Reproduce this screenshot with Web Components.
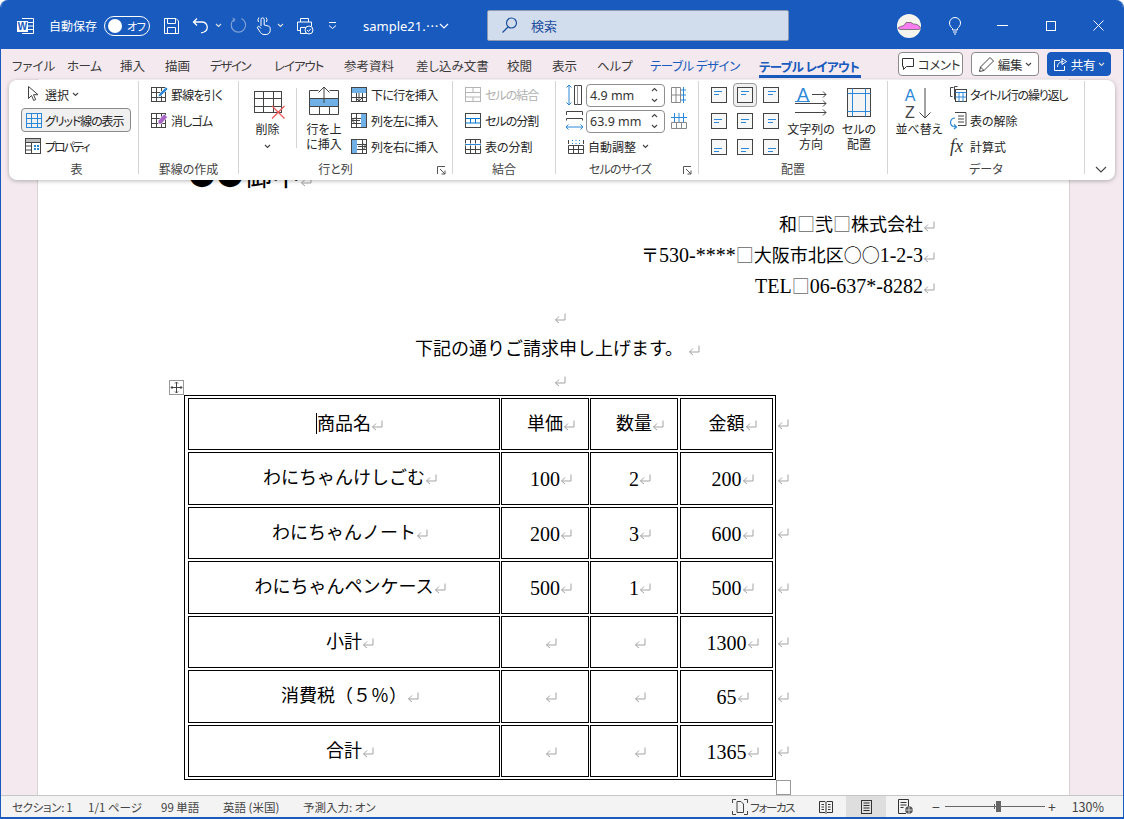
<!DOCTYPE html>
<html lang="ja"><head><meta charset="utf-8"><title>Word</title>
<style>
html,body{margin:0;padding:0;background:#fff}
body{font-family:"Noto Sans CJK JP","Noto Sans",sans-serif}
</style>
<script>
const K='#444',B='#2b88d8',L='#a9d3f2',G='#b5b5b5';
const S=(w,h,c)=>`<svg xmlns="http://www.w3.org/2000/svg" width="${w}" height="${h}" viewBox="0 0 ${w} ${h}" fill="none" stroke-width="1" style="display:block;overflow:visible">${c}</svg>`;
const tbl=(x,y,w,h,cols,rows,c=K)=>{let s=`<rect x="${x+.5}" y="${y+.5}" width="${w-1}" height="${h-1}" stroke="${c}"/>`;
 for(let i=1;i<cols;i++){const X=Math.round(x+w*i/cols)+.5;s+=`<path d="M${X} ${y}v${h}" stroke="${c}"/>`}
 for(let i=1;i<rows;i++){const Y=Math.round(y+h*i/rows)+.5;s+=`<path d="M${x} ${Y}h${w}" stroke="${c}"/>`}return s};
const al=(y,x)=>S(16,16,`<rect x=".5" y=".5" width="15" height="15" fill="#f7f7f7" stroke="${K}"/><path d="M${x} ${y}.5h8M${x} ${y+3}.5h5" stroke="${B}"/>`);
const ICONS={
word:S(18,18,`<path d="M6 1.500h11.500v15H6" stroke="#fff"/><path d="M9 5.500h8M9 9h8M9 12.500h8" stroke="#fff"/><rect x="1" y="4" width="11" height="11" fill="#fff"/><text x="6.500" y="13" font-family="Liberation Sans" font-weight="700" font-size="10" text-anchor="middle" fill="#185abd" stroke="none">W</text>`),
save:S(17,18,`<path d="M1.500 1.500h11.500l2.500 2.500v12.500h-14z" stroke="#fff" stroke-linejoin="round"/><path d="M4.500 1.500v5h8v-5M4.500 16.500v-6h8v6" stroke="#fff"/>`),
undo:S(17,17,`<path d="M5 8.500 1.500 5 5 1.500M1.500 5h8.500a5.200 5.200 0 0 1 2 10l-3 1" stroke="#fff" stroke-width="1.300"/>`),
redo:S(17,17,`<path d="M11.500 1.500A7.200 7.200 0 1 1 4.500 2" stroke="#7f9fd8" stroke-width="1.200"/><path d="M2.500 1 5 2.500 3.500 5" stroke="#7f9fd8"/>`),
touch:S(17,20,`<path d="M6 10V3.500a1.600 1.600 0 0 1 3.200 0V9l4 1c1.300.4 2 1.200 2 2.500v2c0 2-1.700 4-4 4H9c-1.500 0-2.600-.8-3.500-2l-3-4.500c-.6-1.200 1-2.300 2-1.300L6 12.500" stroke="#fff"/><path d="M3.500 6A3.800 3.800 0 0 1 4 1.500M11.500 6a3.800 3.800 0 0 0-.5-4.500" stroke="#fff"/>`),
print:S(18,18,`<path d="M4.500 5V1.500h8V5M4.500 13.500h-3v-8.500h14v4M4.500 10.500h6v6h-6z" stroke="#fff"/><circle cx="13" cy="13" r="4" fill="#185abd" stroke="#fff"/><path d="M11 13l1.500 1.500 2.500-2.800" stroke="#fff"/>`),
custom:S(9,9,`<path d="M1 1.500h7M1 4.500l3.500 3 3.500-3" stroke="#fff"/>`),
chevW:S(10,6,`<path d="M1 1l4 4 4-4" stroke="#fff" stroke-width="1.200"/>`),
chevS:S(7,5,`<path d="M1 1l2.500 2.500L6 1" stroke="#ddd" stroke-width="1.100"/>`),
chev:S(7,5,`<path d="M1 1l2.500 2.500L6 1" stroke="#444" stroke-width="1.100"/>`),
chevL:S(12,7,`<path d="M1 1l5 5 5-5" stroke="#444" stroke-width="1.100"/>`),
search:S(17,17,`<circle cx="10.500" cy="6" r="5" stroke="#1e4f9e" stroke-width="1.200"/><path d="M7 10 1.500 15.500" stroke="#1e4f9e" stroke-width="1.200"/>`),
bulb:S(14,19,`<path d="M4.500 12.500C3 11 1.500 9.500 1.500 7a5.500 5.500 0 0 1 11 0c0 2.500-1.500 4-3 5.500v1.500h-5z" stroke="#fff"/><path d="M5 16h4M6 18h2" stroke="#fff"/>`),
min:S(11,1,`<path d="M0 .5h11" stroke="#fff"/>`),
max:S(10,10,`<rect x=".5" y=".5" width="9" height="9" stroke="#fff"/>`),
close:S(11,11,`<path d="M.5.5l10 10M10.500.5l-10 10" stroke="#fff"/>`),
comment:S(14,14,`<path d="M1.500 1.500h11v8h-7l-3 3v-3h-1z" stroke="#333"/>`),
pencil:S(17,17,`<path d="M1.500 15.500l1-4.500L12 1.500l3.500 3.500L6 14.500z" stroke="#444"/><path d="M2.500 11l3.500 3.500" stroke="#444"/>`),
share:S(15,15,`<path d="M7 3.500H1.500v10h10V9" stroke="#fff"/><path d="M4.500 10c0-3.500 2.500-5.500 6-5.500M9 1.500l4.500 3-4.500 3z" stroke="#fff"/>`),
select:S(16,18,`<path d="M3.500 1.500v12l3-3 2.200 5 2-.9-2.200-4.900h4.500z" stroke="#444" fill="#fff"/>`),
grid:S(16,15,tbl(0,0,16,15,3,3,B)),
props:S(16,16,`<rect x=".5" y=".5" width="15" height="15" stroke="${K}"/><rect x="1" y="1" width="14" height="3" fill="#bbb"/><path d="M.5 4.500h15M6.500 4.500v11M.5 8h6M.5 12h6" stroke="${K}"/><rect x="9" y="7" width="2" height="2" fill="${B}"/><rect x="12" y="7" width="2" height="2" fill="${B}"/><rect x="9" y="10" width="2" height="2" fill="${B}"/><rect x="12" y="10" width="2" height="2" fill="${B}"/>`),
draw:S(17,16,tbl(0,1,15,15,3,3)+`<path d="M7 11l1-3 7-7 2 2-7 7z" fill="${B}" stroke="#fff" stroke-width=".6"/>`),
erase:S(17,16,tbl(0,1,15,15,3,3)+`<path d="M7 9l6-7 3.500 3-6 7h-3z" fill="#a864c4" stroke="#fff" stroke-width=".6"/>`),
del:S(31,28,tbl(0,0,28,22,3,3)+`<path d="M18 15l12.500 12.500M30.500 15 18 27.500" stroke="#ee5a5a" stroke-width="1.300"/>`),
insUp:S(30,29,`<path d="M.5 4.500h9M20.500 4.500h9M.5 4.500v24h29v-24" stroke="${K}"/><rect x="1" y="12" width="28" height="8" fill="#6fb0e6"/><path d="M.5 12.500h29M.5 20.500h29M10.500 20.500v8M20.500 20.500v8" stroke="${K}"/><path d="M15 17V1M9.500 6.500 15 1l5.500 5.500" stroke="${K}"/>`),
insD:S(16,15,tbl(0,0,16,15,3,3)+`<rect x="1" y="1" width="14" height="5" fill="#6fb0e6"/><path d="M8 6v8M5 11l3 3 3-3" stroke="${K}"/>`),
insL:S(16,15,tbl(0,0,16,15,3,3)+`<rect x="10" y="1" width="5" height="13" fill="#6fb0e6"/><path d="M9 7.500H1M4 4.500l-3 3 3 3" stroke="${K}"/>`),
insR:S(16,15,tbl(0,0,16,15,3,3)+`<rect x="1" y="1" width="5" height="13" fill="#6fb0e6"/><path d="M7 7.500h8M12 4.500l3 3-3 3" stroke="${K}"/>`),
merge:S(16,15,`<rect x=".5" y=".5" width="15" height="14" stroke="${G}"/><path d="M.5 5.500h15M.5 10h15M8 .5v5M8 10v5" stroke="${G}"/>`),
splitC:S(16,15,`<rect x=".5" y=".5" width="15" height="14" stroke="${K}"/><path d="M.5 5.500h15M.5 10h15" stroke="#0078d4" stroke-width="1.200"/><path d="M5.500 5.500v4.500M10.500 5.500v4.500" stroke="#0078d4"/>`),
splitT:S(16,15,`<path d="M.5 4.500v-4h15v4M.5 6.500v8h15v-8M5.500 6.500v8M10.500 6.500v8M5.500.5v4M10.500.5v4M.5 10.500h15" stroke="${K}"/><path d="M0 5.500h16" stroke="${B}"/>`),
rowH:S(17,22,`<path d="M3 1v20M.5 3.500 3 1l2.500 2.500M.5 18.500 3 21l2.500-2.500" stroke="${B}"/><path d="M8.500 1.500h7v19h-7z" stroke="${K}"/><path d="M11.500 1.500v19" stroke="#999"/>`),
colW:S(17,22,`<path d="M.5 5v-3.500h16V5M.5 10.500v-2h16v2" stroke="${K}"/><path d="M0 17h17M2.500 14.500 0 17l2.500 2.500M14.500 14.500 17 17l-2.500 2.500" stroke="${B}"/>`),
distH:S(16,17,`<path d="M.5.5h9v15h-9zM.5 8h9M5 .5v15" stroke="#888"/><path d="M12.500 0v16M10 3h5M10 8h5M10 13h5" stroke="${B}"/>`),
distW:S(16,17,`<path d="M.5 9.500h15v6h-15zM5.500 9.500v6M10.500 9.500v6" stroke="#888"/><path d="M0 4.500h16M3.500 0v9M8 0v9M12.500 0v9" stroke="${B}"/>`),
auto:S(16,15,`<path d="M.5 6.500h15v8h-15zM5.500 6.500v8M10.500 6.500v8M.5 10.500h15" stroke="${K}"/><path d="M.5 1v4M15.500 1v4" stroke="${K}"/><path d="M4 1.500h1M7.500 1.500h1M11 1.500h1M4 4.500h1M7.500 4.500h1M11 4.500h1" stroke="${B}"/>`),
a1:al(4,3),a2:al(4,4),a3:al(4,5),a4:al(6,3),a5:al(6,4),a6:al(6,5),a7:al(9,3),a8:al(9,4),a9:al(9,5),
dir:S(32,32,`<text x="8" y="17" font-family="Liberation Sans" font-size="18" text-anchor="middle" fill="${B}" stroke="none">A</text><path d="M0 17.500h15" stroke="${B}"/><path d="M17 10.500h14M28 7.500l3 3-3 3M0 19.500h31M28 16.500l3 3-3 3M0 28.500h31M28 25.500l3 3-3 3" stroke="${K}"/>`),
margin:S(24,29,`<rect x=".5" y=".5" width="23" height="28" fill="#f4f4f4" stroke="${K}"/><path d="M.5 5.500h23M.5 23.500h23M5.500.5v28M18.500.5v28" stroke="${B}"/>`),
sort:S(32,32,`<text x="7" y="14" font-family="Liberation Sans" font-size="16" text-anchor="middle" fill="${B}" stroke="none">A</text><text x="7" y="31" font-family="Liberation Sans" font-size="16" text-anchor="middle" fill="${K}" stroke="none">Z</text><path d="M22 1v30M16.500 25.500 22 31l5.500-5.500" stroke="${K}"/>`),
repeat:S(17,16,`<path d="M.5 1.500h3M.5 1.500v9h2M7.500.5h-3v13" stroke="${K}"/><rect x="5.500" y="3.500" width="11" height="12" fill="#fff" stroke="${K}"/><path d="M5.500 6.500h11M9 6.500v9M13 6.500v9M5.500 11h11" stroke="${B}"/>`),
conv:S(17,18,`<path d="M5 1.500h11v13H8" stroke="${K}"/><path d="M8 5h6M8 8h6M8 11h6" stroke="${K}"/><path d="M5 7a4.500 4.500 0 0 0-2 8.500l3 .5M4 13.500 6.500 16 4 18" stroke="${B}" stroke-width="1.200"/>`),
fx:S(17,17,`<text x="0" y="14" font-family="Liberation Serif" font-style="italic" font-size="18" fill="#333" stroke="none">fx</text>`),
launch:S(9,9,`<path d="M.5 8V.5H8M3 3l5 5M8 4.500V8H4.500" stroke="#555"/>`),
focus:S(16,16,`<path d="M.5 4V.5H4M12 .5h3.500V4M.5 12v3.500H4M12 15.500h3.500V12" stroke="#444"/><path d="M5 2.500h4l2.500 2.500v8.500H5z" stroke="#444"/>`),
read:S(14,14,`<path d="M.5 1.500h5.500l1 1 1-1h5.500v11H8l-1 1-1-1H.5zM7 2.500v10M2.500 4.500h2.500M2.500 7h2.500M2.500 9.500h2.500M9 4.500h2.500M9 7h2.500M9 9.500h2.500" stroke="#333"/>`),
page:S(11,14,`<rect x=".5" y=".5" width="10" height="13" stroke="#333"/><path d="M2.500 3h6M2.500 5.500h6M2.500 8h6M2.500 10.500h6" stroke="#333"/>`),
web:S(15,15,`<path d="M8 14.500H.5V.5h10v8M2.500 3.500h6M2.500 6h6M2.500 8.500h3" stroke="#333"/><circle cx="11" cy="11" r="3.800" fill="#555"/><path d="M7.500 11h7M11 7.500v7" stroke="#fff" stroke-width=".7"/>`),
ret:S(12,12,`<path d="M11 1.500v6.500H1.500M5 4.500 1.500 8 5 11" stroke="#a3a3a3"/>`),
avatar:S(24,24,`<circle cx="12" cy="12" r="12" fill="#f5f5ee"/><path d="M1 14c1-1 4-2 6-2.500l2-3h5l2.500 1.500c3 0 6 1 7 4 0 1.500-2 1.500-4 1.500H3z" fill="#f77cf0" stroke="#555" stroke-width=".7"/>`)
};
class UiIcon extends HTMLElement{constructor(){super();this.attachShadow({mode:'open'})}
 connectedCallback(){this.shadowRoot.innerHTML=`<style>:host{display:inline-block;line-height:0;flex:none}</style>`+(ICONS[this.getAttribute('name')]||'')}}
class RetMark extends HTMLElement{constructor(){super();this.attachShadow({mode:'open'}).innerHTML=`<style>:host{display:inline-block;width:0;height:12px;vertical-align:-1px;overflow:visible;text-align:left}div{width:12px}</style><div>${ICONS.ret}</div>`}}

class WordApp extends HTMLElement{constructor(){super();this.attachShadow({mode:'open'}).innerHTML=`<style>
:host{display:flex;flex-direction:column;width:1124px;height:819px;box-sizing:border-box;border:solid #185abd;border-width:0 1px 2px;border-radius:8px 8px 0 0;overflow:hidden;position:relative;background:#f3e9ee}
.mid{flex:1;position:relative;min-height:0;display:flex;flex-direction:column}
ribbon-panel{position:absolute;left:8px;top:1px}
</style><title-bar></title-bar><tab-bar></tab-bar><div class="mid"><doc-area></doc-area><ribbon-panel></ribbon-panel></div><status-bar></status-bar>`}}

class TitleBar extends HTMLElement{constructor(){super();this.attachShadow({mode:'open'}).innerHTML=`<style>
:host{display:flex;align-items:center;height:49px;margin:0 -1px;padding:2px 0 0;box-sizing:border-box;background:#185abd;color:#fff;font-size:12.500px;font-feature-settings:"palt"}
ui-icon{margin-left:var(--m,0)}
.auto{margin-left:15px;width:50px;white-space:nowrap;font-size:12px}
.tog{margin-left:5px;width:44px;height:18px;border:1.500px solid #fff;border-radius:10px;display:flex;align-items:center;font-size:11px;flex:none;box-sizing:content-box;white-space:nowrap;letter-spacing:-.5px}
.tog i{width:14px;height:14px;background:#fff;border-radius:50%;margin-left:3px;margin-right:5px;flex:none}
.file{margin-left:26px;width:70px;white-space:nowrap;font-family:"Noto Sans","Noto Sans CJK JP",sans-serif;font-size:13px}
.box{margin-left:38px;width:300px;height:29px;background:#d1dcec;border:1px solid #8a9bb3;border-radius:2px;display:flex;align-items:center;color:#1e4f9e;font-size:13px;flex:none}
.box ui-icon{margin:0 13px 0 13px}
.sp{flex:1}
</style>
<ui-icon name="word" style="--m:16px"></ui-icon><span class="auto">自動保存</span><span class="tog"><i></i>オフ</span>
<ui-icon name="save" style="--m:13px"></ui-icon><ui-icon name="undo" style="--m:12px"></ui-icon><ui-icon name="chevS" style="--m:6px"></ui-icon>
<ui-icon name="redo" style="--m:8px"></ui-icon><ui-icon name="touch" style="--m:8px"></ui-icon><ui-icon name="chevS" style="--m:5px"></ui-icon>
<ui-icon name="print" style="--m:12px"></ui-icon><ui-icon name="custom" style="--m:14px"></ui-icon>
<span class="file">sample21.⋯</span><ui-icon name="chevW" style="--m:6px"></ui-icon>
<div class="box"><ui-icon name="search"></ui-icon>検索</div>
<span class="sp"></span>
<ui-icon name="avatar"></ui-icon><ui-icon name="bulb" style="--m:27px"></ui-icon><ui-icon name="min" style="--m:35px"></ui-icon><ui-icon name="max" style="--m:38px"></ui-icon><ui-icon name="close" style="--m:37px;margin-right:20px"></ui-icon>`}}

class TabBar extends HTMLElement{constructor(){super();
 this.attachShadow({mode:'open'}).innerHTML=`<style>
:host{display:flex;align-items:center;height:30px;background:#f3e9ee;color:#3b3b3b;font-size:12.500px;font-feature-settings:"palt";white-space:nowrap;padding:2px 0 0 11px;margin:0 -1px;box-sizing:border-box}
.a{color:#185abd;letter-spacing:-.5px}
.on{color:#185abd;font-weight:700;border-bottom:3px solid #185abd;height:21px;line-height:19px;box-sizing:border-box;letter-spacing:-.6px;align-self:flex-start;margin-top:6px;width:102px}
.b{height:24px;box-sizing:border-box;border:1px solid #8a8a8a;border-radius:4px;background:#fff;display:flex;align-items:center;gap:3px;justify-content:center;margin-top:-2px;flex:none;color:#333;letter-spacing:-.3px}
.s{flex:1}
span{flex:none}
</style>
<span style="width:55px;margin-left:1px">ファイル</span><span style="width:53px;letter-spacing:-.5px">ホーム</span><span style="width:45px">挿入</span><span style="width:45px">描画</span><span style="width:64px;letter-spacing:-1.400px">デザイン</span><span style="width:70px;letter-spacing:-1.100px">レイアウト</span><span style="width:72px">参考資料</span><span style="width:91px">差し込み文書</span><span style="width:45px">校閲</span><span style="width:45px">表示</span><span style="width:53px">ヘルプ</span>
<span class="a" style="width:109px">テーブル デザイン</span><span class="on">テーブル レイアウト</span>
<span class="s"></span>
<div class="b" style="width:65px"><ui-icon name="comment"></ui-icon>コメント</div>
<div class="b" style="width:68px;margin-left:8px"><ui-icon name="pencil"></ui-icon>編集<ui-icon name="chev"></ui-icon></div>
<div class="b" style="width:64px;margin-left:8px;margin-right:13px;background:#185abd;color:#fff;border-color:#185abd"><ui-icon name="share"></ui-icon>共有<ui-icon name="chevS"></ui-icon></div>`}}

class RbGroup extends HTMLElement{
 constructor(){super();this.attachShadow({mode:'open'}).innerHTML=`<style>
:host{display:flex;flex-direction:column;height:93px;box-sizing:border-box;border-right:1px solid #d5d5d5;flex:none;position:relative}
.c{height:79px;display:flex;flex:none}
.l{height:18px;line-height:18px;text-align:center;font-size:12px;color:#444;margin-bottom:-4px;font-feature-settings:"palt";padding:var(--lp,0);letter-spacing:var(--ls,0)}
::slotted([slot=launch]){position:absolute;right:6px;bottom:-1px}
</style><div class="c"><slot></slot></div><div class="l" id="l"></div><slot name="launch"></slot>`}
 connectedCallback(){this.shadowRoot.getElementById('l').textContent=this.getAttribute('label')||''}}

class RbBtn extends HTMLElement{constructor(){super();this.attachShadow({mode:'open'})}
 connectedCallback(){const icon=this.getAttribute('icon'),ml=this.getAttribute('ml')||0,gap=this.getAttribute('gap')||4;
 this.shadowRoot.innerHTML=`<style>
:host{display:flex;align-items:center;height:26px;font-size:12px;color:#262626;white-space:nowrap;font-feature-settings:"palt";box-sizing:border-box}
:host([dim]){color:#b0b0b0}
.i{display:flex;width:16px;justify-content:center;margin-left:${ml}px;margin-right:${gap}px;flex:none}
:host([on]) .w{background:#f0f0f0;border:1px solid #8a8a8a;border-radius:4px;height:24px}
.w{display:flex;align-items:center;width:100%;box-sizing:border-box}
ui-icon{flex:none}
</style><div class="w"><span class="i"><ui-icon name="${icon}"></ui-icon></span><slot></slot></div>`}}

class RbBig extends HTMLElement{constructor(){super();this.attachShadow({mode:'open'})}
 connectedCallback(){const icon=this.getAttribute('icon'),top=this.getAttribute('top')||6,il=this.getAttribute('il')||0;
 this.shadowRoot.innerHTML=`<style>
:host{display:block;flex:none;font-size:12px;line-height:15px;color:#262626;text-align:center;font-feature-settings:"palt";position:relative}
.ic{height:40px;padding-top:${top}px;padding-left:${il}px;box-sizing:border-box;display:flex;justify-content:center}
.tx{white-space:nowrap}
</style><div class="ic"><ui-icon name="${icon}"></ui-icon></div><div class="tx"><slot></slot></div>`}}

class RbSpin extends HTMLElement{constructor(){super();this.attachShadow({mode:'open'}).innerHTML=`<style>
:host{display:flex;align-items:center;width:79px;height:23px;box-sizing:border-box;border:1px solid #8f8f8f;border-radius:4px;font-family:"Noto Sans",sans-serif;font-size:12.500px;color:#333;padding-left:3px;background:#fff;margin-left:3px;position:relative;flex:none}
.a{margin-left:auto;margin-right:6px;display:flex;flex-direction:column;gap:6px}
.u{transform:rotate(180deg)}
ui-icon{display:block}
</style><slot></slot><div class="a"><ui-icon class="u" name="chev"></ui-icon><ui-icon name="chev"></ui-icon></div>`}}

class RibbonPanel extends HTMLElement{constructor(){super();this.attachShadow({mode:'open'}).innerHTML=`<style>
:host{display:flex;width:1106px;height:100px;box-sizing:border-box;padding-top:1px;background:#fff;border-radius:8px;box-shadow:0 1px 4px rgba(0,0,0,.28);font-family:"Noto Sans CJK JP",sans-serif;overflow:hidden}
.col{display:flex;flex-direction:column;flex:none}
.row{display:flex;align-items:center;height:26px;flex:none}
.sep{width:1px;height:60px;background:#d5d5d5;margin:7px 0 0;flex:none}
.cells{display:grid;grid-template-columns:repeat(3,26px);grid-auto-rows:26px;margin:1px 0 0 7px;flex:none;justify-items:center;align-items:center;height:78px}
.cells .sel{background:#f0f0f0;border:1px solid #999;border-radius:4px;box-sizing:border-box;width:24px;height:24px;display:flex;align-items:center;justify-content:center}
.more{margin:auto 0 0 10px;position:relative;top:-7px}
</style>
<rb-group label="表" style="width:130px;--lp:0 0 0 6px"><div class="col" style="width:130px">
 <rb-btn icon="select" ml="16">選択&nbsp;<ui-icon name="chev"></ui-icon></rb-btn>
 <rb-btn icon="grid" on ml="4" gap="3" style="margin-left:12px;width:110px;letter-spacing:-1.100px">グリッド線の表示</rb-btn>
 <rb-btn icon="props" ml="16" style="letter-spacing:-2px">プロパティ</rb-btn>
</div></rb-group>
<rb-group label="罫線の作成" style="width:100px"><div class="col" style="width:100px">
 <rb-btn icon="draw" ml="12" style="letter-spacing:-.8px">罫線を引く</rb-btn>
 <rb-btn icon="erase" ml="12" style="letter-spacing:-.8px">消しゴム</rb-btn>
</div></rb-group>
<rb-group label="行と列" style="width:214px;--lp:0 20px 0 0"><rb-big icon="del" top="10" il="3" style="width:57px">削除<br><ui-icon name="chev"></ui-icon></rb-big><div class="sep"></div>
 <rb-big icon="insUp" top="5" style="width:54px">行を上<br>に挿入</rb-big>
 <div class="col" style="letter-spacing:-.7px"><rb-btn icon="insD">下に行を挿入</rb-btn><rb-btn icon="insL">列を左に挿入</rb-btn><rb-btn icon="insR">列を右に挿入</rb-btn></div>
 <ui-icon slot="launch" name="launch"></ui-icon></rb-group>
<rb-group label="結合" style="width:103px"><div class="col"><rb-btn icon="merge" ml="12" dim style="letter-spacing:-1px">セルの結合</rb-btn><rb-btn icon="splitC" ml="12" style="letter-spacing:-1px">セルの分割</rb-btn><rb-btn icon="splitT" ml="12">表の分割</rb-btn></div></rb-group>
<rb-group label="セルのサイズ" style="width:143px;--lp:0 14px 0 0;--ls:-.8px"><div class="col" style="margin:1px 0 0 10px">
 <div class="row"><ui-icon name="rowH"></ui-icon><rb-spin>4.9 mm</rb-spin><ui-icon name="distH" style="margin-left:6px"></ui-icon></div>
 <div class="row"><ui-icon name="colW"></ui-icon><rb-spin>63.9 mm</rb-spin><ui-icon name="distW" style="margin-left:6px"></ui-icon></div>
 <rb-btn icon="auto" ml="2" style="margin-top:-1px">自動調整&nbsp;<ui-icon name="chev" style="margin-left:3px"></ui-icon></rb-btn>
</div><ui-icon slot="launch" name="launch"></ui-icon></rb-group>
<rb-group label="配置" style="width:189px"><div class="cells">
 <ui-icon name="a1"></ui-icon><span class="sel"><ui-icon name="a2"></ui-icon></span><ui-icon name="a3"></ui-icon>
 <ui-icon name="a4"></ui-icon><ui-icon name="a5"></ui-icon><ui-icon name="a6"></ui-icon>
 <ui-icon name="a7"></ui-icon><ui-icon name="a8"></ui-icon><ui-icon name="a9"></ui-icon></div>
 <rb-big icon="dir" top="3" style="width:48px;margin-left:3px">文字列の<br>方向</rb-big>
 <rb-big icon="margin" top="7" style="width:36px;margin-left:6px">セルの<br>配置</rb-big></rb-group>
<rb-group label="データ" style="width:197px"><rb-big icon="sort" top="6" style="width:54px;margin-left:4px">並べ替え</rb-big>
 <div class="col" style="margin-left:4px"><rb-btn icon="repeat" style="letter-spacing:-1.200px">タイトル行の繰り返し</rb-btn><rb-btn icon="conv">表の解除</rb-btn><rb-btn icon="fx"><span>計算式</span></rb-btn></div></rb-group>
<ui-icon class="more" name="chevL"></ui-icon>`}}

class WordCell extends HTMLElement{constructor(){super();this.attachShadow({mode:'open'})}
 connectedCallback(){const caret=this.hasAttribute('caret')?'<i class="caret"></i>':'';
 this.shadowRoot.innerHTML=`<style>
:host{display:flex;align-items:center;justify-content:center;box-sizing:border-box;border:1px solid #000;font-size:18px;color:#000;padding-bottom:1px;font-family:"Liberation Serif","Noto Sans CJK JP",serif;font-weight:400}
.c{text-align:center;white-space:nowrap;line-height:26px;height:26px}
.caret{display:inline-block;width:0;height:21px;border-left:1px solid #000;vertical-align:-4px;margin-left:-1px}
::slotted(b){font-weight:inherit;font-size:20px;vertical-align:-2px}
</style><div class="c">${caret}<slot></slot><ret-mark></ret-mark></div>`}}

class WordTable extends HTMLElement{constructor(){super();this.attachShadow({mode:'open'}).innerHTML=`<style>
:host{display:flex;position:relative;width:max-content;--r:52px 53px 52px 53px 52px 53px 52px}
.t{display:grid;grid-template-columns:312px 88px 89px 93px;grid-template-rows:var(--r);column-gap:1px;row-gap:2px;border:1px solid #000;padding:2px 2px 2px 3px}
::slotted(:nth-child(4n+3)){margin-right:1px}
.m{display:grid;grid-template-rows:var(--r);row-gap:2px;padding-top:3px;align-items:center;margin-left:1px}
.h{position:absolute;box-sizing:border-box;background:#fff;border:1px solid #999;width:15px;height:15px}
.mv{left:-15px;top:-15px}
.rs{left:592px;top:385px}
svg{display:block}
</style>
<div class="h mv"><svg width="13" height="13" viewBox="0 0 13 13" fill="none"><path d="M6.500 1v11M1 6.500h11M5 2.500l1.500-1.500L8 2.500M5 10.500l1.500 1.500L8 10.500M2.500 5 1 6.500 2.500 8M10.500 5l1.500 1.500L10.500 8" stroke="#444"/></svg></div>
<div class="t"><slot></slot></div>
<div class="m">${'<ret-mark></ret-mark>'.repeat(7)}</div>
<div class="h rs"></div>`}}

class DocArea extends HTMLElement{constructor(){super();this.attachShadow({mode:'open'}).innerHTML=`<style>
:host{display:block;flex:1;min-height:0;overflow:hidden;background:#f3e9ee;padding:0 53px 0 36px}
.p{background:#fff;border-left:1px solid #d9d2d5;border-right:1px solid #d9d2d5;height:100%;box-sizing:border-box;padding:81px 146px 0 146px;color:#000;font-size:18px;font-family:"Liberation Serif","Noto Sans CJK JP",serif;font-weight:400;overflow:hidden}
.to{height:28px;line-height:28px;font-size:28px;padding-left:4px;margin-bottom:19px;white-space:nowrap;font-family:"Noto Sans CJK JP",sans-serif}
.l{height:31.500px;line-height:31.500px;text-align:right;white-space:nowrap}
.ce{text-align:center}
.n{font-size:20px}
.q{color:#666;font-family:"Noto Sans CJK JP",sans-serif}
.j{font-family:"Noto Sans CJK JP",sans-serif}
word-table{margin-top:-1px}
.end{margin-top:14px;text-align:center;line-height:14px}
</style>
<div class="p">
<div class="to">●●御中<ret-mark></ret-mark></div>
<div class="l" style="line-height:33.500px">和<span class="q">□</span>弐<span class="q">□</span>株式会社<ret-mark></ret-mark></div>
<div class="l">〒<span class="n">530-****</span><span class="q">□</span>大阪市北区<span class="j">○○</span><span class="n">1-2-3</span><ret-mark></ret-mark></div>
<div class="l"><span class="n">TEL</span><span class="q">□</span><span class="n">06-637*-8282</span><ret-mark></ret-mark></div>
<div class="l ce"><ret-mark></ret-mark></div>
<div class="l ce" style="line-height:33.500px;padding-right:4px">下記の通りご請求申し上げます。<ret-mark style="margin-left:5px"></ret-mark></div>
<div class="l ce"><ret-mark></ret-mark></div>
<word-table>
<word-cell caret>商品名</word-cell><word-cell>単価</word-cell><word-cell>数量</word-cell><word-cell>金額</word-cell>
<word-cell>わにちゃんけしごむ</word-cell><word-cell><b>100</b></word-cell><word-cell><b>2</b></word-cell><word-cell><b>200</b></word-cell>
<word-cell>わにちゃんノート</word-cell><word-cell><b>200</b></word-cell><word-cell><b>3</b></word-cell><word-cell><b>600</b></word-cell>
<word-cell>わにちゃんペンケース</word-cell><word-cell><b>500</b></word-cell><word-cell><b>1</b></word-cell><word-cell><b>500</b></word-cell>
<word-cell>小計</word-cell><word-cell></word-cell><word-cell></word-cell><word-cell><b>1300</b></word-cell>
<word-cell>消費税（５％）</word-cell><word-cell></word-cell><word-cell></word-cell><word-cell><b>65</b></word-cell>
<word-cell>合計</word-cell><word-cell></word-cell><word-cell></word-cell><word-cell><b>1365</b></word-cell>
</word-table>
<div class="end"><ret-mark></ret-mark></div>
</div>`}}

class StatusBar extends HTMLElement{constructor(){super();this.attachShadow({mode:'open'}).innerHTML=`<style>
:host{display:flex;align-items:center;height:22px;box-sizing:border-box;background:#f3f3f3;border-top:1px solid #c6c6c6;font-size:11.500px;color:#444;font-feature-settings:"palt";white-space:nowrap;padding-left:11px;flex:none}
span{flex:none}
.s{flex:1}
.act{background:#dedede;width:40px;height:21px;display:flex;align-items:center;justify-content:center;margin-left:13px;flex:none}
.track{width:100px;height:1px;background:#666;margin-left:5px;position:relative;flex:none}
.track i{position:absolute;left:51px;top:-5px;width:5px;height:11px;background:#666}
.track u{position:absolute;left:49px;top:-2px;width:1px;height:5px;background:#666}
ui-icon{margin-left:var(--m,0)}
</style>
<span style="width:76px;letter-spacing:-.3px">セクション: 1</span><span style="width:73px">1/1 ページ</span><span style="width:62px">99 単語</span><span style="width:80px">英語 (米国)</span><span>予測入力: オン</span>
<span class="s"></span>
<ui-icon name="focus"></ui-icon><span style="margin-left:2px;letter-spacing:-1.400px">フォーカス</span>
<ui-icon name="read" style="--m:25px"></ui-icon><div class="act"><ui-icon name="page"></ui-icon></div><ui-icon name="web" style="--m:12px"></ui-icon>
<span style="margin-left:19px;font-size:14px;line-height:1">−</span><div class="track"><u></u><i></i></div><span style="margin-left:3px;font-size:14px;line-height:1">+</span><span style="margin:0 19px 0 16px;font-size:12.500px">130%</span>`}}

customElements.define('ui-icon',UiIcon);customElements.define('ret-mark',RetMark);
customElements.define('title-bar',TitleBar);customElements.define('tab-bar',TabBar);
customElements.define('rb-group',RbGroup);customElements.define('rb-btn',RbBtn);customElements.define('rb-big',RbBig);customElements.define('rb-spin',RbSpin);
customElements.define('ribbon-panel',RibbonPanel);customElements.define('word-cell',WordCell);customElements.define('word-table',WordTable);
customElements.define('doc-area',DocArea);customElements.define('status-bar',StatusBar);customElements.define('word-app',WordApp);
</script></head><body><word-app></word-app></body></html>
